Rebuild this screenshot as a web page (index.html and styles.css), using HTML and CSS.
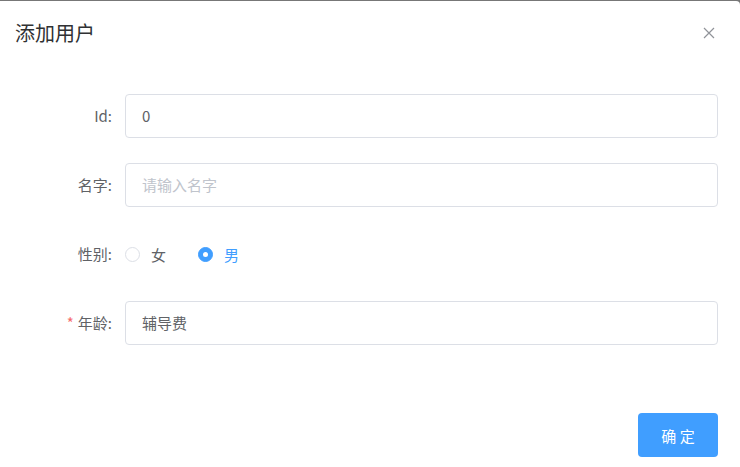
FILE: index.html
```html
<!DOCTYPE html>
<html lang="zh">
<head>
<meta charset="utf-8">
<title>添加用户</title>
<link rel="stylesheet" href="styles.css">
</head>
<body>
<div class="dialog">
  <div class="dialog-header">
    <span class="dialog-title">添加用户</span>
    <button class="dialog-close" aria-label="Close">
      <svg width="12" height="12" viewBox="0 0 12 12"><path d="M1 1 L11 11 M11 1 L1 11" stroke="#909399" stroke-width="1.2" fill="none"/></svg>
    </button>
  </div>
  <form class="dialog-body">
    <div class="form-item">
      <label class="form-label">Id:</label>
      <input class="form-input" type="text" value="0">
    </div>
    <div class="form-item">
      <label class="form-label">名字:</label>
      <input class="form-input" type="text" placeholder="请输入名字">
    </div>
    <div class="form-item">
      <label class="form-label">性别:</label>
      <div class="radio-group">
        <span class="radio"><span class="radio-circle"></span><span class="radio-text">女</span></span>
        <span class="radio checked"><span class="radio-circle"></span><span class="radio-text">男</span></span>
      </div>
    </div>
    <div class="form-item">
      <label class="form-label required">年龄:</label>
      <input class="form-input" type="text" value="辅导费">
    </div>
  </form>
  <div class="dialog-footer">
    <button class="btn-primary">确 定</button>
  </div>
</div>
</body>
</html>
```
FILE: styles.css
```css
html, body {
  margin: 0;
  padding: 0;
  height: 100%;
}
body {
  background: #777777;
  font-family: "Noto Sans CJK SC", "Noto Sans", sans-serif;
  overflow: hidden;
}
.dialog {
  margin-top: 1px;
  background: #ffffff;
  border-top-right-radius: 4px;
  height: 466px;
  box-sizing: border-box;
}
.dialog-header {
  display: flex;
  justify-content: space-between;
  align-items: center;
  padding: 20px 25px 0 15px;
  height: 24px;
}
.dialog-title {
  font-size: 20px;
  line-height: 24px;
  color: #303133;
}
.dialog-close {
  border: 0;
  background: none;
  padding: 0;
  width: 12px;
  height: 12px;
  display: flex;
  cursor: pointer;
}
.dialog-body {
  padding: 49px 22px 0 0;
  margin: 0;
}
.form-item {
  display: flex;
  align-items: center;
  height: 44px;
  margin-bottom: 25px;
}
.form-label {
  width: 125px;
  flex: none;
  box-sizing: border-box;
  padding-right: 13px;
  padding-bottom: 1px;
  text-align: right;
  font-size: 15px;
  color: #606266;
}
.form-label.required::before {
  content: "*";
  color: #f56c6c;
  margin-right: 4px;
}
.form-input {
  flex: 1;
  height: 44px;
  box-sizing: border-box;
  border: 1px solid #dcdfe6;
  border-radius: 4px;
  padding: 0 16px 1px;
  font-family: inherit;
  font-size: 15px;
  color: #606266;
  outline: none;
  background: #fff;
}
.form-input::placeholder {
  color: #c0c4cc;
}
.radio-group {
  display: flex;
  align-items: center;
  gap: 32px;
}
.radio {
  display: flex;
  align-items: center;
  gap: 11px;
  font-size: 15px;
  color: #606266;
}
.radio-circle {
  width: 15px;
  height: 15px;
  box-sizing: border-box;
  border: 1px solid #dcdfe6;
  border-radius: 50%;
  display: flex;
  align-items: center;
  justify-content: center;
  background: #fff;
}
.radio.checked .radio-circle {
  background: #409eff;
  border-color: #409eff;
}
.radio.checked .radio-circle::after {
  content: "";
  width: 5px;
  height: 5px;
  border-radius: 50%;
  background: #fff;
}
.radio.checked .radio-text {
  color: #409eff;
}
.dialog-footer {
  display: flex;
  justify-content: flex-end;
  padding: 43px 22px 0 0;
}
.btn-primary {
  width: 80px;
  height: 44px;
  border: 0;
  border-radius: 4px;
  background: #409eff;
  color: #fff;
  font-family: inherit;
  font-size: 15px;
  cursor: pointer;
}
```
